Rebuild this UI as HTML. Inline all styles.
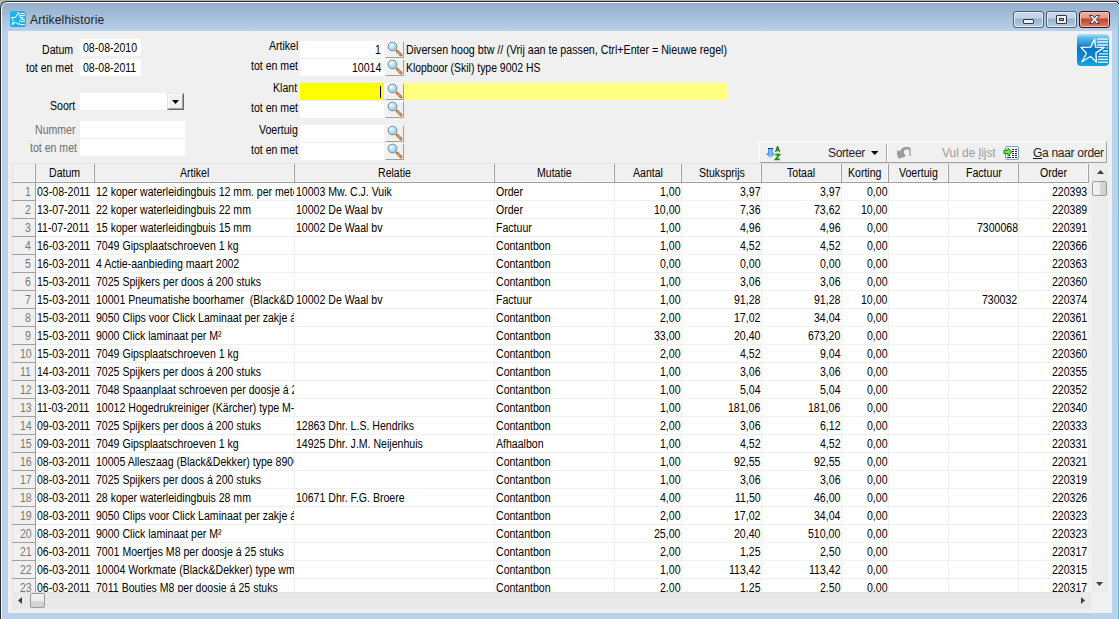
<!DOCTYPE html>
<html><head><meta charset="utf-8">
<style>
*{margin:0;padding:0}
html,body{width:1119px;height:619px;overflow:hidden;background:#b1b1b1}
body{position:relative;font-family:"Liberation Sans",sans-serif;font-size:11px;color:#000}
.abs{position:absolute}
.clip{overflow:hidden}
.t{position:absolute;white-space:nowrap;overflow:hidden;line-height:12px;height:12px;letter-spacing:-0.15px}
.hd{text-align:center}
.cl{text-align:left}
.cr{text-align:right}
.ind{text-align:right;color:#6d6d6d}
.lbl{position:absolute;white-space:nowrap;line-height:12px;text-align:right;letter-spacing:-0.15px}
.box{position:absolute;background:#fff}
.sbtn{position:absolute;width:19px;height:17px;box-sizing:border-box;background:#f0f0f0;border-top:1px solid #fff;border-left:1px solid #fff;border-right:1px solid #a0a0a0;border-bottom:1px solid #a0a0a0}
.seg{font-size:12px;letter-spacing:0;line-height:14px}
.tx{position:absolute;white-space:pre;font-size:12px;line-height:14px;height:14px;transform-origin:0 0}
.cp{position:absolute;overflow:hidden}
.sg{position:absolute;white-space:nowrap;font-size:12px;line-height:14px}
</style></head><body>
<!-- window frame -->
<div class="abs" style="left:0;top:1px;width:1119px;height:618px;background:#2b2b2b;border-radius:7px 4px 0 0"></div>
<div class="abs" style="left:1px;top:2px;width:1117px;height:617px;background:#f4f8fc;border-radius:6px 3px 0 0"></div>
<div class="abs" style="left:2px;top:3px;width:1116px;height:616px;background:linear-gradient(#93aecb 0px,#b9d1ea 28px,#b9d1ea 100%);border-radius:5px 2px 0 0"></div>
<div class="abs" style="left:1118px;top:4px;width:1px;height:615px;background:linear-gradient(#6fd6f4 0,#45c6ef 30px,#3ec4ee 100%)"></div>
<!-- title -->
<svg class="abs" style="left:10px;top:11px" width="16" height="16" viewBox="0 0 16 16">
<path d="M1.5 0h13l1.5 1.5v13l-1.5 1.5h-13l-1.5-1.5v-13z" fill="#19b2ee"/>
<path d="M8.3 1.3 L10 6.3 L13.2 6.5 L10 9.3 L8.8 13.8 L5.8 11.3 L2 13.8 L3.6 9.5 L1.1 6.5 L5.6 6.3 Z" fill="none" stroke="#fff" stroke-width="1"/>
<path d="M10 2.5h5M10 4.5h5M12 8.5h3M11 10.5h4M10 13.5h5" stroke="#fff" stroke-width="1"/>
</svg>
<!-- caption buttons -->
<div class="abs" style="left:1013px;top:11px;width:31px;height:17px;box-sizing:border-box;border:1px solid #4f5f75;border-radius:3px;background:linear-gradient(#dbe6f3 0,#c4d6ea 1px,#c4d6ea 6px,#99b2cd 7px,#b7cde5 100%);box-shadow:inset 0 0 0 1px #e3ecf6"></div>
<div class="abs" style="left:1023px;top:19px;width:11px;height:5px;box-sizing:border-box;border:1px solid #2e3a4c;border-radius:1px;background:#f2f2f2"></div>
<div class="abs" style="left:1046px;top:11px;width:31px;height:17px;box-sizing:border-box;border:1px solid #4f5f75;border-radius:3px;background:linear-gradient(#dbe6f3 0,#c4d6ea 1px,#c4d6ea 6px,#99b2cd 7px,#b7cde5 100%);box-shadow:inset 0 0 0 1px #e3ecf6"></div>
<div class="abs" style="left:1056px;top:15px;width:11px;height:9px;box-sizing:border-box;border:1px solid #2e3a4c;border-radius:1px;background:#f2f2f2"></div>
<div class="abs" style="left:1059px;top:18px;width:5px;height:3px;box-sizing:border-box;border:1px solid #2e3a4c;background:#9fb8d6"></div>
<div class="abs" style="left:1079px;top:11px;width:31px;height:17px;box-sizing:border-box;border:1px solid #3f0c12;border-radius:3px;background:linear-gradient(#eab0a4 0,#e39a8a 6px,#c4432a 7px,#d97a63 100%);box-shadow:inset 0 0 0 1px #f2c3b8"></div>
<svg class="abs" style="left:1089px;top:15px" width="11" height="9" viewBox="0 0 11 9">
<path d="M0.5 0.5 L3.8 0.5 L5.5 3 L7.2 0.5 L10.5 0.5 L7.3 4.5 L10.5 8.5 L7.2 8.5 L5.5 6 L3.8 8.5 L0.5 8.5 L3.7 4.5 Z" fill="#f8f8f8" stroke="#3a3f4e" stroke-width="1" stroke-linejoin="round"/>
</svg>
<!-- client -->
<div class="abs" style="left:8px;top:31px;width:1104px;height:582px;background:#f0f0f0"></div>
<!-- logo -->
<svg class="abs" style="left:1077px;top:34px" width="32" height="32" viewBox="0 0 32 32">
<defs><linearGradient id="lg" x1="0" y1="0" x2="0" y2="1">
<stop offset="0" stop-color="#b4e2f8"/><stop offset="0.12" stop-color="#5bb8ea"/><stop offset="0.45" stop-color="#0a76c6"/><stop offset="0.75" stop-color="#0a8ad2"/><stop offset="1" stop-color="#12a8e2"/></linearGradient></defs>
<rect x="0" y="0" width="32" height="32" rx="4" fill="url(#lg)"/>
<path d="M17.6 5 L18.6 13.1 L27.3 13.4 L18.9 18.9 L19.5 28 L13.4 22.5 L5 27.7 L9.5 19.3 L4 13.4 L13.7 13.1 Z" fill="none" stroke="#fff" stroke-width="1.3" stroke-linejoin="round"/>
<path d="M20 5h11M20 8h11M20 11h11M29.5 14h1.5M26 17h5M22 19.8h9M21 22.6h10M21 25.4h10M21 28.2h10" stroke="#e6f6fd" stroke-width="1.3"/>
</svg>
<!-- left form -->
<div class="box" style="left:80px;top:39px;width:61px;height:17px"></div>
<div class="box" style="left:80px;top:59px;width:61px;height:17px"></div>
<div class="box" style="left:80px;top:93px;width:104px;height:17px"></div>
<div class="abs" style="left:167px;top:93px;width:17px;height:17px;box-sizing:border-box;border-top:1px solid #e3e3e3;border-left:1px solid #e3e3e3;border-right:1px solid #696969;border-bottom:1px solid #696969;background:#f0f0f0"><div style="position:absolute;left:0;top:0;width:15px;height:15px;box-sizing:border-box;border-top:1px solid #fff;border-left:1px solid #fff;border-right:1px solid #a0a0a0;border-bottom:1px solid #a0a0a0"></div></div>
<svg class="abs" style="left:172px;top:100px" width="7" height="4"><path d="M0 0h7L3.5 4z" fill="#000"/></svg>
<div class="box" style="left:80px;top:121px;width:105px;height:17px"></div>
<div class="box" style="left:80px;top:139px;width:105px;height:17px"></div>
<!-- middle form -->
<div class="box" style="left:300px;top:41px;width:84px;height:17px"></div>
<div class="sbtn" style="left:385px;top:41px"></div>
<div class="box" style="left:300px;top:59px;width:84px;height:17px"></div>
<div class="sbtn" style="left:385px;top:59px"></div>
<div class="box" style="left:300px;top:83px;width:84px;height:17px;background:#ffff00"></div>
<div class="abs" style="left:380px;top:86px;width:1px;height:12px;background:#000080"></div>
<div class="sbtn" style="left:385px;top:83px"></div>
<div class="box" style="left:404px;top:83px;width:324px;height:17px;background:#ffff80"></div>
<div class="box" style="left:300px;top:101px;width:84px;height:17px"></div>
<div class="sbtn" style="left:385px;top:101px"></div>
<div class="box" style="left:300px;top:125px;width:84px;height:17px"></div>
<div class="sbtn" style="left:385px;top:125px"></div>
<div class="box" style="left:300px;top:143px;width:84px;height:17px"></div>
<div class="sbtn" style="left:385px;top:143px"></div>
<svg class="abs" style="left:385px;top:41px" width="19" height="17" viewBox="0 0 19 17">
<defs><radialGradient id="mg41" cx="0.38" cy="0.35" r="0.65"><stop offset="0" stop-color="#ffffff"/><stop offset="0.45" stop-color="#b8e6fb"/><stop offset="1" stop-color="#88cdf0"/></radialGradient></defs>
<line x1="12" y1="10" x2="16" y2="14" stroke="#7a6a60" stroke-width="2.8" stroke-linecap="round"/>
<line x1="12.3" y1="10.3" x2="15.7" y2="13.7" stroke="#ff8c28" stroke-width="1.6" stroke-linecap="round"/>
<line x1="13" y1="11.6" x2="14.6" y2="13.2" stroke="#ffd060" stroke-width="0.7"/>
<circle cx="7.5" cy="5.5" r="4.4" fill="url(#mg41)" stroke="#7d7d7d" stroke-width="0.9"/>
</svg>
<svg class="abs" style="left:385px;top:59px" width="19" height="17" viewBox="0 0 19 17">
<defs><radialGradient id="mg59" cx="0.38" cy="0.35" r="0.65"><stop offset="0" stop-color="#ffffff"/><stop offset="0.45" stop-color="#b8e6fb"/><stop offset="1" stop-color="#88cdf0"/></radialGradient></defs>
<line x1="12" y1="10" x2="16" y2="14" stroke="#7a6a60" stroke-width="2.8" stroke-linecap="round"/>
<line x1="12.3" y1="10.3" x2="15.7" y2="13.7" stroke="#ff8c28" stroke-width="1.6" stroke-linecap="round"/>
<line x1="13" y1="11.6" x2="14.6" y2="13.2" stroke="#ffd060" stroke-width="0.7"/>
<circle cx="7.5" cy="5.5" r="4.4" fill="url(#mg59)" stroke="#7d7d7d" stroke-width="0.9"/>
</svg>
<svg class="abs" style="left:385px;top:83px" width="19" height="17" viewBox="0 0 19 17">
<defs><radialGradient id="mg83" cx="0.38" cy="0.35" r="0.65"><stop offset="0" stop-color="#ffffff"/><stop offset="0.45" stop-color="#b8e6fb"/><stop offset="1" stop-color="#88cdf0"/></radialGradient></defs>
<line x1="12" y1="10" x2="16" y2="14" stroke="#7a6a60" stroke-width="2.8" stroke-linecap="round"/>
<line x1="12.3" y1="10.3" x2="15.7" y2="13.7" stroke="#ff8c28" stroke-width="1.6" stroke-linecap="round"/>
<line x1="13" y1="11.6" x2="14.6" y2="13.2" stroke="#ffd060" stroke-width="0.7"/>
<circle cx="7.5" cy="5.5" r="4.4" fill="url(#mg83)" stroke="#7d7d7d" stroke-width="0.9"/>
</svg>
<svg class="abs" style="left:385px;top:101px" width="19" height="17" viewBox="0 0 19 17">
<defs><radialGradient id="mg101" cx="0.38" cy="0.35" r="0.65"><stop offset="0" stop-color="#ffffff"/><stop offset="0.45" stop-color="#b8e6fb"/><stop offset="1" stop-color="#88cdf0"/></radialGradient></defs>
<line x1="12" y1="10" x2="16" y2="14" stroke="#7a6a60" stroke-width="2.8" stroke-linecap="round"/>
<line x1="12.3" y1="10.3" x2="15.7" y2="13.7" stroke="#ff8c28" stroke-width="1.6" stroke-linecap="round"/>
<line x1="13" y1="11.6" x2="14.6" y2="13.2" stroke="#ffd060" stroke-width="0.7"/>
<circle cx="7.5" cy="5.5" r="4.4" fill="url(#mg101)" stroke="#7d7d7d" stroke-width="0.9"/>
</svg>
<svg class="abs" style="left:385px;top:125px" width="19" height="17" viewBox="0 0 19 17">
<defs><radialGradient id="mg125" cx="0.38" cy="0.35" r="0.65"><stop offset="0" stop-color="#ffffff"/><stop offset="0.45" stop-color="#b8e6fb"/><stop offset="1" stop-color="#88cdf0"/></radialGradient></defs>
<line x1="12" y1="10" x2="16" y2="14" stroke="#7a6a60" stroke-width="2.8" stroke-linecap="round"/>
<line x1="12.3" y1="10.3" x2="15.7" y2="13.7" stroke="#ff8c28" stroke-width="1.6" stroke-linecap="round"/>
<line x1="13" y1="11.6" x2="14.6" y2="13.2" stroke="#ffd060" stroke-width="0.7"/>
<circle cx="7.5" cy="5.5" r="4.4" fill="url(#mg125)" stroke="#7d7d7d" stroke-width="0.9"/>
</svg>
<svg class="abs" style="left:385px;top:143px" width="19" height="17" viewBox="0 0 19 17">
<defs><radialGradient id="mg143" cx="0.38" cy="0.35" r="0.65"><stop offset="0" stop-color="#ffffff"/><stop offset="0.45" stop-color="#b8e6fb"/><stop offset="1" stop-color="#88cdf0"/></radialGradient></defs>
<line x1="12" y1="10" x2="16" y2="14" stroke="#7a6a60" stroke-width="2.8" stroke-linecap="round"/>
<line x1="12.3" y1="10.3" x2="15.7" y2="13.7" stroke="#ff8c28" stroke-width="1.6" stroke-linecap="round"/>
<line x1="13" y1="11.6" x2="14.6" y2="13.2" stroke="#ffd060" stroke-width="0.7"/>
<circle cx="7.5" cy="5.5" r="4.4" fill="url(#mg143)" stroke="#7d7d7d" stroke-width="0.9"/>
</svg>
<!-- toolbar -->
<div class="abs" style="left:759px;top:141px;width:348px;height:22px;box-sizing:border-box;border-top:1px solid #fff;border-left:1px solid #fff;border-right:1px solid #a0a0a0;border-bottom:1px solid #a0a0a0;background:#f0f0f0"></div>
<svg class="abs" style="left:760px;top:142px" width="24" height="20" viewBox="0 0 24 20">
<defs><linearGradient id="sg" x1="0" y1="0" x2="1" y2="0"><stop offset="0" stop-color="#0f5fd8"/><stop offset="0.5" stop-color="#8cc4fa"/><stop offset="1" stop-color="#1a6ee0"/></linearGradient></defs>
<path d="M8 6h5v5.5h2.2L10.5 16 5.8 11.5H8z" fill="url(#sg)"/>
<path d="M8 6.5h5" stroke="#0a3fb0" stroke-width="1"/>
<path d="M15.6 10 L17.6 4.6 L19.6 10 M16.4 8.3h2.4" fill="none" stroke="#139013" stroke-width="1.4" stroke-linejoin="round"/>
<path d="M15.3 12.6h4.2L15.5 17.4h4.3" fill="none" stroke="#139013" stroke-width="1.6"/>
</svg>
<svg class="abs" style="left:871px;top:151px" width="8" height="4"><path d="M0 0h7.5L3.75 4z" fill="#000"/></svg>
<div class="abs" style="left:886px;top:144px;width:1px;height:18px;background:#a8a8a8"></div>
<div class="abs" style="left:887px;top:144px;width:1px;height:18px;background:#fff"></div>
<svg class="abs" style="left:892px;top:143px" width="24" height="20" viewBox="0 0 24 20">
<path d="M5 7 L7 8.5 L10.5 5 L12.5 4 L17.5 4 L18.6 5.5 L18.8 13 L17.6 13 L17.3 7.2 L16.3 6.5 L13 6.5 L11.8 8.5 L12 10.5 L13.8 12.6 L12 14.2 L9 14.8 L7.5 15.8 L6 14.5 L5 11.5 Z" fill="#9c9c9c"/>
</svg>
<svg class="abs" style="left:1000px;top:142px" width="24" height="20" viewBox="0 0 24 20">
<rect x="5.5" y="4.5" width="13" height="13" rx="1.5" fill="#fbfdff" stroke="#7c9fd8" stroke-width="1"/>
<path d="M12 7.5h2M15 7.5h2M12 9.5h2M15 9.5h2M12 11.5h2M15 11.5h2M9 13.5h1M12 13.5h2M15 13.5h2M7 15.5h4M12 15.5h2M15 15.5h2" stroke="#2a2a2a" stroke-width="1"/>
<path d="M4 8.3h4V6.2l3.7 3.8L8 13.8v-2.1H4z" fill="#7de05a" stroke="#0a8a0a" stroke-width="1"/>
</svg>
<div class="abs" style="left:12px;top:163px;width:1077px;height:20px;background:#f0f0f0;border-top:1px solid #e3e3e3;border-left:1px solid #e3e3e3;box-sizing:border-box"></div>
<div class="abs" style="left:12px;top:182px;width:1077px;height:1px;background:#a0a0a0"></div>
<div class="abs" style="left:13px;top:181px;width:1076px;height:1px;background:#f8f8f8"></div>
<div class="abs" style="left:36px;top:183px;width:1052px;height:409px;background:#fff"></div>
<div class="abs" style="left:12px;top:183px;width:23px;height:409px;background:#f0f0f0;border-left:1px solid #e3e3e3;box-sizing:border-box"></div>
<div class="abs" style="left:35px;top:164px;width:1px;height:18px;background:#a0a0a0"></div>
<div class="abs" style="left:34px;top:164px;width:1px;height:17px;background:#f8f8f8"></div>
<div class="abs" style="left:94px;top:164px;width:1px;height:18px;background:#a0a0a0"></div>
<div class="abs" style="left:93px;top:164px;width:1px;height:17px;background:#f8f8f8"></div>
<div class="abs" style="left:294px;top:164px;width:1px;height:18px;background:#a0a0a0"></div>
<div class="abs" style="left:293px;top:164px;width:1px;height:17px;background:#f8f8f8"></div>
<div class="abs" style="left:494px;top:164px;width:1px;height:18px;background:#a0a0a0"></div>
<div class="abs" style="left:493px;top:164px;width:1px;height:17px;background:#f8f8f8"></div>
<div class="abs" style="left:614px;top:164px;width:1px;height:18px;background:#a0a0a0"></div>
<div class="abs" style="left:613px;top:164px;width:1px;height:17px;background:#f8f8f8"></div>
<div class="abs" style="left:681px;top:164px;width:1px;height:18px;background:#a0a0a0"></div>
<div class="abs" style="left:680px;top:164px;width:1px;height:17px;background:#f8f8f8"></div>
<div class="abs" style="left:761px;top:164px;width:1px;height:18px;background:#a0a0a0"></div>
<div class="abs" style="left:760px;top:164px;width:1px;height:17px;background:#f8f8f8"></div>
<div class="abs" style="left:841px;top:164px;width:1px;height:18px;background:#a0a0a0"></div>
<div class="abs" style="left:840px;top:164px;width:1px;height:17px;background:#f8f8f8"></div>
<div class="abs" style="left:888px;top:164px;width:1px;height:18px;background:#a0a0a0"></div>
<div class="abs" style="left:887px;top:164px;width:1px;height:17px;background:#f8f8f8"></div>
<div class="abs" style="left:948px;top:164px;width:1px;height:18px;background:#a0a0a0"></div>
<div class="abs" style="left:947px;top:164px;width:1px;height:17px;background:#f8f8f8"></div>
<div class="abs" style="left:1018px;top:164px;width:1px;height:18px;background:#a0a0a0"></div>
<div class="abs" style="left:1017px;top:164px;width:1px;height:17px;background:#f8f8f8"></div>
<div class="abs" style="left:1088px;top:164px;width:1px;height:18px;background:#a0a0a0"></div>
<div class="abs" style="left:1087px;top:164px;width:1px;height:17px;background:#f8f8f8"></div>
<div class="abs" style="left:12px;top:200px;width:23px;height:1px;background:#a0a0a0"></div>
<div class="abs" style="left:36px;top:200px;width:1052px;height:1px;background:#f0f0f0"></div>
<div class="abs" style="left:12px;top:218px;width:23px;height:1px;background:#a0a0a0"></div>
<div class="abs" style="left:36px;top:218px;width:1052px;height:1px;background:#f0f0f0"></div>
<div class="abs" style="left:12px;top:236px;width:23px;height:1px;background:#a0a0a0"></div>
<div class="abs" style="left:36px;top:236px;width:1052px;height:1px;background:#f0f0f0"></div>
<div class="abs" style="left:12px;top:254px;width:23px;height:1px;background:#a0a0a0"></div>
<div class="abs" style="left:36px;top:254px;width:1052px;height:1px;background:#f0f0f0"></div>
<div class="abs" style="left:12px;top:272px;width:23px;height:1px;background:#a0a0a0"></div>
<div class="abs" style="left:36px;top:272px;width:1052px;height:1px;background:#f0f0f0"></div>
<div class="abs" style="left:12px;top:290px;width:23px;height:1px;background:#a0a0a0"></div>
<div class="abs" style="left:36px;top:290px;width:1052px;height:1px;background:#f0f0f0"></div>
<div class="abs" style="left:12px;top:308px;width:23px;height:1px;background:#a0a0a0"></div>
<div class="abs" style="left:36px;top:308px;width:1052px;height:1px;background:#f0f0f0"></div>
<div class="abs" style="left:12px;top:326px;width:23px;height:1px;background:#a0a0a0"></div>
<div class="abs" style="left:36px;top:326px;width:1052px;height:1px;background:#f0f0f0"></div>
<div class="abs" style="left:12px;top:344px;width:23px;height:1px;background:#a0a0a0"></div>
<div class="abs" style="left:36px;top:344px;width:1052px;height:1px;background:#f0f0f0"></div>
<div class="abs" style="left:12px;top:362px;width:23px;height:1px;background:#a0a0a0"></div>
<div class="abs" style="left:36px;top:362px;width:1052px;height:1px;background:#f0f0f0"></div>
<div class="abs" style="left:12px;top:380px;width:23px;height:1px;background:#a0a0a0"></div>
<div class="abs" style="left:36px;top:380px;width:1052px;height:1px;background:#f0f0f0"></div>
<div class="abs" style="left:12px;top:398px;width:23px;height:1px;background:#a0a0a0"></div>
<div class="abs" style="left:36px;top:398px;width:1052px;height:1px;background:#f0f0f0"></div>
<div class="abs" style="left:12px;top:416px;width:23px;height:1px;background:#a0a0a0"></div>
<div class="abs" style="left:36px;top:416px;width:1052px;height:1px;background:#f0f0f0"></div>
<div class="abs" style="left:12px;top:434px;width:23px;height:1px;background:#a0a0a0"></div>
<div class="abs" style="left:36px;top:434px;width:1052px;height:1px;background:#f0f0f0"></div>
<div class="abs" style="left:12px;top:452px;width:23px;height:1px;background:#a0a0a0"></div>
<div class="abs" style="left:36px;top:452px;width:1052px;height:1px;background:#f0f0f0"></div>
<div class="abs" style="left:12px;top:470px;width:23px;height:1px;background:#a0a0a0"></div>
<div class="abs" style="left:36px;top:470px;width:1052px;height:1px;background:#f0f0f0"></div>
<div class="abs" style="left:12px;top:488px;width:23px;height:1px;background:#a0a0a0"></div>
<div class="abs" style="left:36px;top:488px;width:1052px;height:1px;background:#f0f0f0"></div>
<div class="abs" style="left:12px;top:506px;width:23px;height:1px;background:#a0a0a0"></div>
<div class="abs" style="left:36px;top:506px;width:1052px;height:1px;background:#f0f0f0"></div>
<div class="abs" style="left:12px;top:524px;width:23px;height:1px;background:#a0a0a0"></div>
<div class="abs" style="left:36px;top:524px;width:1052px;height:1px;background:#f0f0f0"></div>
<div class="abs" style="left:12px;top:542px;width:23px;height:1px;background:#a0a0a0"></div>
<div class="abs" style="left:36px;top:542px;width:1052px;height:1px;background:#f0f0f0"></div>
<div class="abs" style="left:12px;top:560px;width:23px;height:1px;background:#a0a0a0"></div>
<div class="abs" style="left:36px;top:560px;width:1052px;height:1px;background:#f0f0f0"></div>
<div class="abs" style="left:12px;top:578px;width:23px;height:1px;background:#a0a0a0"></div>
<div class="abs" style="left:36px;top:578px;width:1052px;height:1px;background:#f0f0f0"></div>
<div class="abs" style="left:94px;top:183px;width:1px;height:409px;background:#f0f0f0"></div>
<div class="abs" style="left:294px;top:183px;width:1px;height:409px;background:#f0f0f0"></div>
<div class="abs" style="left:494px;top:183px;width:1px;height:409px;background:#f0f0f0"></div>
<div class="abs" style="left:614px;top:183px;width:1px;height:409px;background:#f0f0f0"></div>
<div class="abs" style="left:681px;top:183px;width:1px;height:409px;background:#f0f0f0"></div>
<div class="abs" style="left:761px;top:183px;width:1px;height:409px;background:#f0f0f0"></div>
<div class="abs" style="left:841px;top:183px;width:1px;height:409px;background:#f0f0f0"></div>
<div class="abs" style="left:888px;top:183px;width:1px;height:409px;background:#f0f0f0"></div>
<div class="abs" style="left:948px;top:183px;width:1px;height:409px;background:#f0f0f0"></div>
<div class="abs" style="left:1018px;top:183px;width:1px;height:409px;background:#f0f0f0"></div>
<div class="abs" style="left:1088px;top:183px;width:1px;height:409px;background:#f0f0f0"></div>
<div class="abs" style="left:35px;top:183px;width:1px;height:409px;background:#a0a0a0"></div>
<div class="tx" style="left:42.39px;top:43px;transform:scaleX(0.8800)">Datum</div>
<div class="tx" style="left:82.60px;top:41px;transform:scaleX(0.8800)">08-08-2010</div>
<div class="tx" style="left:25.96px;top:61px;transform:scaleX(0.8800)">tot en met</div>
<div class="tx" style="left:82.60px;top:61px;transform:scaleX(0.8800)">08-08-2011</div>
<div class="tx" style="left:50.47px;top:99px;transform:scaleX(0.8800)">Soort</div>
<div class="tx" style="left:34.81px;top:123px;transform:scaleX(0.8800);color:#6d6d6d">Nummer</div>
<div class="tx" style="left:29.76px;top:141px;transform:scaleX(0.8800);color:#6d6d6d">tot en met</div>
<div class="tx" style="left:268.85px;top:39px;transform:scaleX(0.8800)">Artikel</div>
<div class="tx" style="left:374.84px;top:43px;transform:scaleX(0.8800)">1</div>
<div class="tx" style="left:406.00px;top:43px;transform:scaleX(0.8890)">Diversen hoog btw // (Vrij aan te passen, Ctrl+Enter = Nieuwe regel)</div>
<div class="tx" style="left:250.56px;top:59px;transform:scaleX(0.8800)">tot en met</div>
<div class="tx" style="left:351.85px;top:61px;transform:scaleX(0.8800)">10014</div>
<div class="tx" style="left:405.80px;top:61px;transform:scaleX(0.8685)">Klopboor (Skil) type 9002 HS</div>
<div class="tx" style="left:272.64px;top:81px;transform:scaleX(0.8800)">Klant</div>
<div class="tx" style="left:250.56px;top:101px;transform:scaleX(0.8800)">tot en met</div>
<div class="tx" style="left:259.44px;top:123px;transform:scaleX(0.8800)">Voertuig</div>
<div class="tx" style="left:250.56px;top:143px;transform:scaleX(0.8800)">tot en met</div>
<div class="tx" style="left:49.45px;top:166px;transform:scaleX(0.8800)">Datum</div>
<div class="tx" style="left:179.83px;top:166px;transform:scaleX(0.8800)">Artikel</div>
<div class="tx" style="left:378.06px;top:166px;transform:scaleX(0.8800)">Relatie</div>
<div class="tx" style="left:537.19px;top:166px;transform:scaleX(0.8800)">Mutatie</div>
<div class="tx" style="left:633.03px;top:166px;transform:scaleX(0.8800)">Aantal</div>
<div class="tx" style="left:698.61px;top:166px;transform:scaleX(0.8800)">Stuksprijs</div>
<div class="tx" style="left:787.41px;top:166px;transform:scaleX(0.8800)">Totaal</div>
<div class="tx" style="left:848.27px;top:166px;transform:scaleX(0.8800)">Korting</div>
<div class="tx" style="left:899.13px;top:166px;transform:scaleX(0.8800)">Voertuig</div>
<div class="tx" style="left:965.60px;top:166px;transform:scaleX(0.8800)">Factuur</div>
<div class="tx" style="left:1040.00px;top:166px;transform:scaleX(0.8800)">Order</div>
<div class="cp" style="left:12px;top:183px;width:23px;height:17px"><div class="tx" style="left:13.43px;top:2px;transform:scaleX(0.8800);color:#787878">1</div></div>
<div class="cp" style="left:36px;top:183px;width:58px;height:17px"><div class="tx" style="left:1.40px;top:2px;transform:scaleX(0.8800)">03-08-2011</div></div>
<div class="cp" style="left:95px;top:183px;width:199px;height:17px"><div class="tx" style="left:1.40px;top:2px;transform:scaleX(0.8800)">12 koper waterleidingbuis 12 mm. per meter</div></div>
<div class="cp" style="left:295px;top:183px;width:199px;height:17px"><div class="tx" style="left:1.40px;top:2px;transform:scaleX(0.8800)">10003 Mw. C.J. Vuik</div></div>
<div class="cp" style="left:495px;top:183px;width:119px;height:17px"><div class="tx" style="left:1.40px;top:2px;transform:scaleX(0.8800)">Order</div></div>
<div class="cp" style="left:615px;top:183px;width:66px;height:17px"><div class="tx" style="left:45.15px;top:2px;transform:scaleX(0.8800)">1,00</div></div>
<div class="cp" style="left:682px;top:183px;width:79px;height:17px"><div class="tx" style="left:58.15px;top:2px;transform:scaleX(0.8800)">3,97</div></div>
<div class="cp" style="left:762px;top:183px;width:79px;height:17px"><div class="tx" style="left:58.15px;top:2px;transform:scaleX(0.8800)">3,97</div></div>
<div class="cp" style="left:842px;top:183px;width:46px;height:17px"><div class="tx" style="left:25.15px;top:2px;transform:scaleX(0.8800)">0,00</div></div>
<div class="cp" style="left:1019px;top:183px;width:69px;height:17px"><div class="tx" style="left:33.46px;top:2px;transform:scaleX(0.8800)">220393</div></div>
<div class="cp" style="left:12px;top:201px;width:23px;height:17px"><div class="tx" style="left:13.43px;top:2px;transform:scaleX(0.8800);color:#787878">2</div></div>
<div class="cp" style="left:36px;top:201px;width:58px;height:17px"><div class="tx" style="left:1.40px;top:2px;transform:scaleX(0.8800)">13-07-2011</div></div>
<div class="cp" style="left:95px;top:201px;width:199px;height:17px"><div class="tx" style="left:1.40px;top:2px;transform:scaleX(0.8800)">22 koper waterleidingbuis 22 mm</div></div>
<div class="cp" style="left:295px;top:201px;width:199px;height:17px"><div class="tx" style="left:1.40px;top:2px;transform:scaleX(0.8800)">10002 De Waal bv</div></div>
<div class="cp" style="left:495px;top:201px;width:119px;height:17px"><div class="tx" style="left:1.40px;top:2px;transform:scaleX(0.8800)">Order</div></div>
<div class="cp" style="left:615px;top:201px;width:66px;height:17px"><div class="tx" style="left:39.27px;top:2px;transform:scaleX(0.8800)">10,00</div></div>
<div class="cp" style="left:682px;top:201px;width:79px;height:17px"><div class="tx" style="left:58.15px;top:2px;transform:scaleX(0.8800)">7,36</div></div>
<div class="cp" style="left:762px;top:201px;width:79px;height:17px"><div class="tx" style="left:52.27px;top:2px;transform:scaleX(0.8800)">73,62</div></div>
<div class="cp" style="left:842px;top:201px;width:46px;height:17px"><div class="tx" style="left:19.27px;top:2px;transform:scaleX(0.8800)">10,00</div></div>
<div class="cp" style="left:1019px;top:201px;width:69px;height:17px"><div class="tx" style="left:33.46px;top:2px;transform:scaleX(0.8800)">220389</div></div>
<div class="cp" style="left:12px;top:219px;width:23px;height:17px"><div class="tx" style="left:13.43px;top:2px;transform:scaleX(0.8800);color:#787878">3</div></div>
<div class="cp" style="left:36px;top:219px;width:58px;height:17px"><div class="tx" style="left:1.40px;top:2px;transform:scaleX(0.8800)">11-07-2011</div></div>
<div class="cp" style="left:95px;top:219px;width:199px;height:17px"><div class="tx" style="left:1.40px;top:2px;transform:scaleX(0.8800)">15 koper waterleidingbuis 15 mm</div></div>
<div class="cp" style="left:295px;top:219px;width:199px;height:17px"><div class="tx" style="left:1.40px;top:2px;transform:scaleX(0.8800)">10002 De Waal bv</div></div>
<div class="cp" style="left:495px;top:219px;width:119px;height:17px"><div class="tx" style="left:1.40px;top:2px;transform:scaleX(0.8800)">Factuur</div></div>
<div class="cp" style="left:615px;top:219px;width:66px;height:17px"><div class="tx" style="left:45.15px;top:2px;transform:scaleX(0.8800)">1,00</div></div>
<div class="cp" style="left:682px;top:219px;width:79px;height:17px"><div class="tx" style="left:58.15px;top:2px;transform:scaleX(0.8800)">4,96</div></div>
<div class="cp" style="left:762px;top:219px;width:79px;height:17px"><div class="tx" style="left:58.15px;top:2px;transform:scaleX(0.8800)">4,96</div></div>
<div class="cp" style="left:842px;top:219px;width:46px;height:17px"><div class="tx" style="left:25.15px;top:2px;transform:scaleX(0.8800)">0,00</div></div>
<div class="cp" style="left:949px;top:219px;width:69px;height:17px"><div class="tx" style="left:27.59px;top:2px;transform:scaleX(0.8800)">7300068</div></div>
<div class="cp" style="left:1019px;top:219px;width:69px;height:17px"><div class="tx" style="left:33.46px;top:2px;transform:scaleX(0.8800)">220391</div></div>
<div class="cp" style="left:12px;top:237px;width:23px;height:17px"><div class="tx" style="left:13.43px;top:2px;transform:scaleX(0.8800);color:#787878">4</div></div>
<div class="cp" style="left:36px;top:237px;width:58px;height:17px"><div class="tx" style="left:1.40px;top:2px;transform:scaleX(0.8800)">16-03-2011</div></div>
<div class="cp" style="left:95px;top:237px;width:199px;height:17px"><div class="tx" style="left:1.40px;top:2px;transform:scaleX(0.8800)">7049 Gipsplaatschroeven 1 kg</div></div>
<div class="cp" style="left:495px;top:237px;width:119px;height:17px"><div class="tx" style="left:1.40px;top:2px;transform:scaleX(0.8800)">Contantbon</div></div>
<div class="cp" style="left:615px;top:237px;width:66px;height:17px"><div class="tx" style="left:45.15px;top:2px;transform:scaleX(0.8800)">1,00</div></div>
<div class="cp" style="left:682px;top:237px;width:79px;height:17px"><div class="tx" style="left:58.15px;top:2px;transform:scaleX(0.8800)">4,52</div></div>
<div class="cp" style="left:762px;top:237px;width:79px;height:17px"><div class="tx" style="left:58.15px;top:2px;transform:scaleX(0.8800)">4,52</div></div>
<div class="cp" style="left:842px;top:237px;width:46px;height:17px"><div class="tx" style="left:25.15px;top:2px;transform:scaleX(0.8800)">0,00</div></div>
<div class="cp" style="left:1019px;top:237px;width:69px;height:17px"><div class="tx" style="left:33.46px;top:2px;transform:scaleX(0.8800)">220366</div></div>
<div class="cp" style="left:12px;top:255px;width:23px;height:17px"><div class="tx" style="left:13.43px;top:2px;transform:scaleX(0.8800);color:#787878">5</div></div>
<div class="cp" style="left:36px;top:255px;width:58px;height:17px"><div class="tx" style="left:1.40px;top:2px;transform:scaleX(0.8800)">16-03-2011</div></div>
<div class="cp" style="left:95px;top:255px;width:199px;height:17px"><div class="tx" style="left:1.40px;top:2px;transform:scaleX(0.8800)">4 Actie-aanbieding maart 2002</div></div>
<div class="cp" style="left:495px;top:255px;width:119px;height:17px"><div class="tx" style="left:1.40px;top:2px;transform:scaleX(0.8800)">Contantbon</div></div>
<div class="cp" style="left:615px;top:255px;width:66px;height:17px"><div class="tx" style="left:45.15px;top:2px;transform:scaleX(0.8800)">0,00</div></div>
<div class="cp" style="left:682px;top:255px;width:79px;height:17px"><div class="tx" style="left:58.15px;top:2px;transform:scaleX(0.8800)">0,00</div></div>
<div class="cp" style="left:762px;top:255px;width:79px;height:17px"><div class="tx" style="left:58.15px;top:2px;transform:scaleX(0.8800)">0,00</div></div>
<div class="cp" style="left:842px;top:255px;width:46px;height:17px"><div class="tx" style="left:25.15px;top:2px;transform:scaleX(0.8800)">0,00</div></div>
<div class="cp" style="left:1019px;top:255px;width:69px;height:17px"><div class="tx" style="left:33.46px;top:2px;transform:scaleX(0.8800)">220363</div></div>
<div class="cp" style="left:12px;top:273px;width:23px;height:17px"><div class="tx" style="left:13.43px;top:2px;transform:scaleX(0.8800);color:#787878">6</div></div>
<div class="cp" style="left:36px;top:273px;width:58px;height:17px"><div class="tx" style="left:1.40px;top:2px;transform:scaleX(0.8800)">15-03-2011</div></div>
<div class="cp" style="left:95px;top:273px;width:199px;height:17px"><div class="tx" style="left:1.40px;top:2px;transform:scaleX(0.8800)">7025 Spijkers per doos á 200 stuks</div></div>
<div class="cp" style="left:495px;top:273px;width:119px;height:17px"><div class="tx" style="left:1.40px;top:2px;transform:scaleX(0.8800)">Contantbon</div></div>
<div class="cp" style="left:615px;top:273px;width:66px;height:17px"><div class="tx" style="left:45.15px;top:2px;transform:scaleX(0.8800)">1,00</div></div>
<div class="cp" style="left:682px;top:273px;width:79px;height:17px"><div class="tx" style="left:58.15px;top:2px;transform:scaleX(0.8800)">3,06</div></div>
<div class="cp" style="left:762px;top:273px;width:79px;height:17px"><div class="tx" style="left:58.15px;top:2px;transform:scaleX(0.8800)">3,06</div></div>
<div class="cp" style="left:842px;top:273px;width:46px;height:17px"><div class="tx" style="left:25.15px;top:2px;transform:scaleX(0.8800)">0,00</div></div>
<div class="cp" style="left:1019px;top:273px;width:69px;height:17px"><div class="tx" style="left:33.46px;top:2px;transform:scaleX(0.8800)">220360</div></div>
<div class="cp" style="left:12px;top:291px;width:23px;height:17px"><div class="tx" style="left:13.43px;top:2px;transform:scaleX(0.8800);color:#787878">7</div></div>
<div class="cp" style="left:36px;top:291px;width:58px;height:17px"><div class="tx" style="left:1.40px;top:2px;transform:scaleX(0.8800)">15-03-2011</div></div>
<div class="cp" style="left:95px;top:291px;width:199px;height:17px"><div class="tx" style="left:1.40px;top:2px;transform:scaleX(0.8800)">10001 Pneumatishe boorhamer  (Black&amp;Decker)</div></div>
<div class="cp" style="left:295px;top:291px;width:199px;height:17px"><div class="tx" style="left:1.40px;top:2px;transform:scaleX(0.8800)">10002 De Waal bv</div></div>
<div class="cp" style="left:495px;top:291px;width:119px;height:17px"><div class="tx" style="left:1.40px;top:2px;transform:scaleX(0.8800)">Factuur</div></div>
<div class="cp" style="left:615px;top:291px;width:66px;height:17px"><div class="tx" style="left:45.15px;top:2px;transform:scaleX(0.8800)">1,00</div></div>
<div class="cp" style="left:682px;top:291px;width:79px;height:17px"><div class="tx" style="left:52.27px;top:2px;transform:scaleX(0.8800)">91,28</div></div>
<div class="cp" style="left:762px;top:291px;width:79px;height:17px"><div class="tx" style="left:52.27px;top:2px;transform:scaleX(0.8800)">91,28</div></div>
<div class="cp" style="left:842px;top:291px;width:46px;height:17px"><div class="tx" style="left:19.27px;top:2px;transform:scaleX(0.8800)">10,00</div></div>
<div class="cp" style="left:949px;top:291px;width:69px;height:17px"><div class="tx" style="left:33.46px;top:2px;transform:scaleX(0.8800)">730032</div></div>
<div class="cp" style="left:1019px;top:291px;width:69px;height:17px"><div class="tx" style="left:33.46px;top:2px;transform:scaleX(0.8800)">220374</div></div>
<div class="cp" style="left:12px;top:309px;width:23px;height:17px"><div class="tx" style="left:13.43px;top:2px;transform:scaleX(0.8800);color:#787878">8</div></div>
<div class="cp" style="left:36px;top:309px;width:58px;height:17px"><div class="tx" style="left:1.40px;top:2px;transform:scaleX(0.8800)">15-03-2011</div></div>
<div class="cp" style="left:95px;top:309px;width:199px;height:17px"><div class="tx" style="left:1.40px;top:2px;transform:scaleX(0.8800)">9050 Clips voor Click Laminaat per zakje á 100</div></div>
<div class="cp" style="left:495px;top:309px;width:119px;height:17px"><div class="tx" style="left:1.40px;top:2px;transform:scaleX(0.8800)">Contantbon</div></div>
<div class="cp" style="left:615px;top:309px;width:66px;height:17px"><div class="tx" style="left:45.15px;top:2px;transform:scaleX(0.8800)">2,00</div></div>
<div class="cp" style="left:682px;top:309px;width:79px;height:17px"><div class="tx" style="left:52.27px;top:2px;transform:scaleX(0.8800)">17,02</div></div>
<div class="cp" style="left:762px;top:309px;width:79px;height:17px"><div class="tx" style="left:52.27px;top:2px;transform:scaleX(0.8800)">34,04</div></div>
<div class="cp" style="left:842px;top:309px;width:46px;height:17px"><div class="tx" style="left:25.15px;top:2px;transform:scaleX(0.8800)">0,00</div></div>
<div class="cp" style="left:1019px;top:309px;width:69px;height:17px"><div class="tx" style="left:33.46px;top:2px;transform:scaleX(0.8800)">220361</div></div>
<div class="cp" style="left:12px;top:327px;width:23px;height:17px"><div class="tx" style="left:13.43px;top:2px;transform:scaleX(0.8800);color:#787878">9</div></div>
<div class="cp" style="left:36px;top:327px;width:58px;height:17px"><div class="tx" style="left:1.40px;top:2px;transform:scaleX(0.8800)">15-03-2011</div></div>
<div class="cp" style="left:95px;top:327px;width:199px;height:17px"><div class="tx" style="left:1.40px;top:2px;transform:scaleX(0.8800)">9000 Click laminaat per M²</div></div>
<div class="cp" style="left:495px;top:327px;width:119px;height:17px"><div class="tx" style="left:1.40px;top:2px;transform:scaleX(0.8800)">Contantbon</div></div>
<div class="cp" style="left:615px;top:327px;width:66px;height:17px"><div class="tx" style="left:39.27px;top:2px;transform:scaleX(0.8800)">33,00</div></div>
<div class="cp" style="left:682px;top:327px;width:79px;height:17px"><div class="tx" style="left:52.27px;top:2px;transform:scaleX(0.8800)">20,40</div></div>
<div class="cp" style="left:762px;top:327px;width:79px;height:17px"><div class="tx" style="left:46.40px;top:2px;transform:scaleX(0.8800)">673,20</div></div>
<div class="cp" style="left:842px;top:327px;width:46px;height:17px"><div class="tx" style="left:25.15px;top:2px;transform:scaleX(0.8800)">0,00</div></div>
<div class="cp" style="left:1019px;top:327px;width:69px;height:17px"><div class="tx" style="left:33.46px;top:2px;transform:scaleX(0.8800)">220361</div></div>
<div class="cp" style="left:12px;top:345px;width:23px;height:17px"><div class="tx" style="left:7.55px;top:2px;transform:scaleX(0.8800);color:#787878">10</div></div>
<div class="cp" style="left:36px;top:345px;width:58px;height:17px"><div class="tx" style="left:1.40px;top:2px;transform:scaleX(0.8800)">15-03-2011</div></div>
<div class="cp" style="left:95px;top:345px;width:199px;height:17px"><div class="tx" style="left:1.40px;top:2px;transform:scaleX(0.8800)">7049 Gipsplaatschroeven 1 kg</div></div>
<div class="cp" style="left:495px;top:345px;width:119px;height:17px"><div class="tx" style="left:1.40px;top:2px;transform:scaleX(0.8800)">Contantbon</div></div>
<div class="cp" style="left:615px;top:345px;width:66px;height:17px"><div class="tx" style="left:45.15px;top:2px;transform:scaleX(0.8800)">2,00</div></div>
<div class="cp" style="left:682px;top:345px;width:79px;height:17px"><div class="tx" style="left:58.15px;top:2px;transform:scaleX(0.8800)">4,52</div></div>
<div class="cp" style="left:762px;top:345px;width:79px;height:17px"><div class="tx" style="left:58.15px;top:2px;transform:scaleX(0.8800)">9,04</div></div>
<div class="cp" style="left:842px;top:345px;width:46px;height:17px"><div class="tx" style="left:25.15px;top:2px;transform:scaleX(0.8800)">0,00</div></div>
<div class="cp" style="left:1019px;top:345px;width:69px;height:17px"><div class="tx" style="left:33.46px;top:2px;transform:scaleX(0.8800)">220360</div></div>
<div class="cp" style="left:12px;top:363px;width:23px;height:17px"><div class="tx" style="left:8.34px;top:2px;transform:scaleX(0.8800);color:#787878">11</div></div>
<div class="cp" style="left:36px;top:363px;width:58px;height:17px"><div class="tx" style="left:1.40px;top:2px;transform:scaleX(0.8800)">14-03-2011</div></div>
<div class="cp" style="left:95px;top:363px;width:199px;height:17px"><div class="tx" style="left:1.40px;top:2px;transform:scaleX(0.8800)">7025 Spijkers per doos á 200 stuks</div></div>
<div class="cp" style="left:495px;top:363px;width:119px;height:17px"><div class="tx" style="left:1.40px;top:2px;transform:scaleX(0.8800)">Contantbon</div></div>
<div class="cp" style="left:615px;top:363px;width:66px;height:17px"><div class="tx" style="left:45.15px;top:2px;transform:scaleX(0.8800)">1,00</div></div>
<div class="cp" style="left:682px;top:363px;width:79px;height:17px"><div class="tx" style="left:58.15px;top:2px;transform:scaleX(0.8800)">3,06</div></div>
<div class="cp" style="left:762px;top:363px;width:79px;height:17px"><div class="tx" style="left:58.15px;top:2px;transform:scaleX(0.8800)">3,06</div></div>
<div class="cp" style="left:842px;top:363px;width:46px;height:17px"><div class="tx" style="left:25.15px;top:2px;transform:scaleX(0.8800)">0,00</div></div>
<div class="cp" style="left:1019px;top:363px;width:69px;height:17px"><div class="tx" style="left:33.46px;top:2px;transform:scaleX(0.8800)">220355</div></div>
<div class="cp" style="left:12px;top:381px;width:23px;height:17px"><div class="tx" style="left:7.55px;top:2px;transform:scaleX(0.8800);color:#787878">12</div></div>
<div class="cp" style="left:36px;top:381px;width:58px;height:17px"><div class="tx" style="left:1.40px;top:2px;transform:scaleX(0.8800)">13-03-2011</div></div>
<div class="cp" style="left:95px;top:381px;width:199px;height:17px"><div class="tx" style="left:1.40px;top:2px;transform:scaleX(0.8800)">7048 Spaanplaat schroeven per doosje á 200</div></div>
<div class="cp" style="left:495px;top:381px;width:119px;height:17px"><div class="tx" style="left:1.40px;top:2px;transform:scaleX(0.8800)">Contantbon</div></div>
<div class="cp" style="left:615px;top:381px;width:66px;height:17px"><div class="tx" style="left:45.15px;top:2px;transform:scaleX(0.8800)">1,00</div></div>
<div class="cp" style="left:682px;top:381px;width:79px;height:17px"><div class="tx" style="left:58.15px;top:2px;transform:scaleX(0.8800)">5,04</div></div>
<div class="cp" style="left:762px;top:381px;width:79px;height:17px"><div class="tx" style="left:58.15px;top:2px;transform:scaleX(0.8800)">5,04</div></div>
<div class="cp" style="left:842px;top:381px;width:46px;height:17px"><div class="tx" style="left:25.15px;top:2px;transform:scaleX(0.8800)">0,00</div></div>
<div class="cp" style="left:1019px;top:381px;width:69px;height:17px"><div class="tx" style="left:33.46px;top:2px;transform:scaleX(0.8800)">220352</div></div>
<div class="cp" style="left:12px;top:399px;width:23px;height:17px"><div class="tx" style="left:7.55px;top:2px;transform:scaleX(0.8800);color:#787878">13</div></div>
<div class="cp" style="left:36px;top:399px;width:58px;height:17px"><div class="tx" style="left:1.40px;top:2px;transform:scaleX(0.8800)">11-03-2011</div></div>
<div class="cp" style="left:95px;top:399px;width:199px;height:17px"><div class="tx" style="left:1.40px;top:2px;transform:scaleX(0.8800)">10012 Hogedrukreiniger (Kärcher) type M-2000</div></div>
<div class="cp" style="left:495px;top:399px;width:119px;height:17px"><div class="tx" style="left:1.40px;top:2px;transform:scaleX(0.8800)">Contantbon</div></div>
<div class="cp" style="left:615px;top:399px;width:66px;height:17px"><div class="tx" style="left:45.15px;top:2px;transform:scaleX(0.8800)">1,00</div></div>
<div class="cp" style="left:682px;top:399px;width:79px;height:17px"><div class="tx" style="left:46.40px;top:2px;transform:scaleX(0.8800)">181,06</div></div>
<div class="cp" style="left:762px;top:399px;width:79px;height:17px"><div class="tx" style="left:46.40px;top:2px;transform:scaleX(0.8800)">181,06</div></div>
<div class="cp" style="left:842px;top:399px;width:46px;height:17px"><div class="tx" style="left:25.15px;top:2px;transform:scaleX(0.8800)">0,00</div></div>
<div class="cp" style="left:1019px;top:399px;width:69px;height:17px"><div class="tx" style="left:33.46px;top:2px;transform:scaleX(0.8800)">220340</div></div>
<div class="cp" style="left:12px;top:417px;width:23px;height:17px"><div class="tx" style="left:7.55px;top:2px;transform:scaleX(0.8800);color:#787878">14</div></div>
<div class="cp" style="left:36px;top:417px;width:58px;height:17px"><div class="tx" style="left:1.40px;top:2px;transform:scaleX(0.8800)">09-03-2011</div></div>
<div class="cp" style="left:95px;top:417px;width:199px;height:17px"><div class="tx" style="left:1.40px;top:2px;transform:scaleX(0.8800)">7025 Spijkers per doos á 200 stuks</div></div>
<div class="cp" style="left:295px;top:417px;width:199px;height:17px"><div class="tx" style="left:1.40px;top:2px;transform:scaleX(0.8800)">12863 Dhr. L.S. Hendriks</div></div>
<div class="cp" style="left:495px;top:417px;width:119px;height:17px"><div class="tx" style="left:1.40px;top:2px;transform:scaleX(0.8800)">Contantbon</div></div>
<div class="cp" style="left:615px;top:417px;width:66px;height:17px"><div class="tx" style="left:45.15px;top:2px;transform:scaleX(0.8800)">2,00</div></div>
<div class="cp" style="left:682px;top:417px;width:79px;height:17px"><div class="tx" style="left:58.15px;top:2px;transform:scaleX(0.8800)">3,06</div></div>
<div class="cp" style="left:762px;top:417px;width:79px;height:17px"><div class="tx" style="left:58.15px;top:2px;transform:scaleX(0.8800)">6,12</div></div>
<div class="cp" style="left:842px;top:417px;width:46px;height:17px"><div class="tx" style="left:25.15px;top:2px;transform:scaleX(0.8800)">0,00</div></div>
<div class="cp" style="left:1019px;top:417px;width:69px;height:17px"><div class="tx" style="left:33.46px;top:2px;transform:scaleX(0.8800)">220333</div></div>
<div class="cp" style="left:12px;top:435px;width:23px;height:17px"><div class="tx" style="left:7.55px;top:2px;transform:scaleX(0.8800);color:#787878">15</div></div>
<div class="cp" style="left:36px;top:435px;width:58px;height:17px"><div class="tx" style="left:1.40px;top:2px;transform:scaleX(0.8800)">09-03-2011</div></div>
<div class="cp" style="left:95px;top:435px;width:199px;height:17px"><div class="tx" style="left:1.40px;top:2px;transform:scaleX(0.8800)">7049 Gipsplaatschroeven 1 kg</div></div>
<div class="cp" style="left:295px;top:435px;width:199px;height:17px"><div class="tx" style="left:1.40px;top:2px;transform:scaleX(0.8800)">14925 Dhr. J.M. Neijenhuis</div></div>
<div class="cp" style="left:495px;top:435px;width:119px;height:17px"><div class="tx" style="left:1.40px;top:2px;transform:scaleX(0.8800)">Afhaalbon</div></div>
<div class="cp" style="left:615px;top:435px;width:66px;height:17px"><div class="tx" style="left:45.15px;top:2px;transform:scaleX(0.8800)">1,00</div></div>
<div class="cp" style="left:682px;top:435px;width:79px;height:17px"><div class="tx" style="left:58.15px;top:2px;transform:scaleX(0.8800)">4,52</div></div>
<div class="cp" style="left:762px;top:435px;width:79px;height:17px"><div class="tx" style="left:58.15px;top:2px;transform:scaleX(0.8800)">4,52</div></div>
<div class="cp" style="left:842px;top:435px;width:46px;height:17px"><div class="tx" style="left:25.15px;top:2px;transform:scaleX(0.8800)">0,00</div></div>
<div class="cp" style="left:1019px;top:435px;width:69px;height:17px"><div class="tx" style="left:33.46px;top:2px;transform:scaleX(0.8800)">220331</div></div>
<div class="cp" style="left:12px;top:453px;width:23px;height:17px"><div class="tx" style="left:7.55px;top:2px;transform:scaleX(0.8800);color:#787878">16</div></div>
<div class="cp" style="left:36px;top:453px;width:58px;height:17px"><div class="tx" style="left:1.40px;top:2px;transform:scaleX(0.8800)">08-03-2011</div></div>
<div class="cp" style="left:95px;top:453px;width:199px;height:17px"><div class="tx" style="left:1.40px;top:2px;transform:scaleX(0.8800)">10005 Alleszaag (Black&amp;Dekker) type 8900</div></div>
<div class="cp" style="left:495px;top:453px;width:119px;height:17px"><div class="tx" style="left:1.40px;top:2px;transform:scaleX(0.8800)">Contantbon</div></div>
<div class="cp" style="left:615px;top:453px;width:66px;height:17px"><div class="tx" style="left:45.15px;top:2px;transform:scaleX(0.8800)">1,00</div></div>
<div class="cp" style="left:682px;top:453px;width:79px;height:17px"><div class="tx" style="left:52.27px;top:2px;transform:scaleX(0.8800)">92,55</div></div>
<div class="cp" style="left:762px;top:453px;width:79px;height:17px"><div class="tx" style="left:52.27px;top:2px;transform:scaleX(0.8800)">92,55</div></div>
<div class="cp" style="left:842px;top:453px;width:46px;height:17px"><div class="tx" style="left:25.15px;top:2px;transform:scaleX(0.8800)">0,00</div></div>
<div class="cp" style="left:1019px;top:453px;width:69px;height:17px"><div class="tx" style="left:33.46px;top:2px;transform:scaleX(0.8800)">220321</div></div>
<div class="cp" style="left:12px;top:471px;width:23px;height:17px"><div class="tx" style="left:7.55px;top:2px;transform:scaleX(0.8800);color:#787878">17</div></div>
<div class="cp" style="left:36px;top:471px;width:58px;height:17px"><div class="tx" style="left:1.40px;top:2px;transform:scaleX(0.8800)">08-03-2011</div></div>
<div class="cp" style="left:95px;top:471px;width:199px;height:17px"><div class="tx" style="left:1.40px;top:2px;transform:scaleX(0.8800)">7025 Spijkers per doos á 200 stuks</div></div>
<div class="cp" style="left:495px;top:471px;width:119px;height:17px"><div class="tx" style="left:1.40px;top:2px;transform:scaleX(0.8800)">Contantbon</div></div>
<div class="cp" style="left:615px;top:471px;width:66px;height:17px"><div class="tx" style="left:45.15px;top:2px;transform:scaleX(0.8800)">1,00</div></div>
<div class="cp" style="left:682px;top:471px;width:79px;height:17px"><div class="tx" style="left:58.15px;top:2px;transform:scaleX(0.8800)">3,06</div></div>
<div class="cp" style="left:762px;top:471px;width:79px;height:17px"><div class="tx" style="left:58.15px;top:2px;transform:scaleX(0.8800)">3,06</div></div>
<div class="cp" style="left:842px;top:471px;width:46px;height:17px"><div class="tx" style="left:25.15px;top:2px;transform:scaleX(0.8800)">0,00</div></div>
<div class="cp" style="left:1019px;top:471px;width:69px;height:17px"><div class="tx" style="left:33.46px;top:2px;transform:scaleX(0.8800)">220319</div></div>
<div class="cp" style="left:12px;top:489px;width:23px;height:17px"><div class="tx" style="left:7.55px;top:2px;transform:scaleX(0.8800);color:#787878">18</div></div>
<div class="cp" style="left:36px;top:489px;width:58px;height:17px"><div class="tx" style="left:1.40px;top:2px;transform:scaleX(0.8800)">08-03-2011</div></div>
<div class="cp" style="left:95px;top:489px;width:199px;height:17px"><div class="tx" style="left:1.40px;top:2px;transform:scaleX(0.8800)">28 koper waterleidingbuis 28 mm</div></div>
<div class="cp" style="left:295px;top:489px;width:199px;height:17px"><div class="tx" style="left:1.40px;top:2px;transform:scaleX(0.8800)">10671 Dhr. F.G. Broere</div></div>
<div class="cp" style="left:495px;top:489px;width:119px;height:17px"><div class="tx" style="left:1.40px;top:2px;transform:scaleX(0.8800)">Contantbon</div></div>
<div class="cp" style="left:615px;top:489px;width:66px;height:17px"><div class="tx" style="left:45.15px;top:2px;transform:scaleX(0.8800)">4,00</div></div>
<div class="cp" style="left:682px;top:489px;width:79px;height:17px"><div class="tx" style="left:53.06px;top:2px;transform:scaleX(0.8800)">11,50</div></div>
<div class="cp" style="left:762px;top:489px;width:79px;height:17px"><div class="tx" style="left:52.27px;top:2px;transform:scaleX(0.8800)">46,00</div></div>
<div class="cp" style="left:842px;top:489px;width:46px;height:17px"><div class="tx" style="left:25.15px;top:2px;transform:scaleX(0.8800)">0,00</div></div>
<div class="cp" style="left:1019px;top:489px;width:69px;height:17px"><div class="tx" style="left:33.46px;top:2px;transform:scaleX(0.8800)">220326</div></div>
<div class="cp" style="left:12px;top:507px;width:23px;height:17px"><div class="tx" style="left:7.55px;top:2px;transform:scaleX(0.8800);color:#787878">19</div></div>
<div class="cp" style="left:36px;top:507px;width:58px;height:17px"><div class="tx" style="left:1.40px;top:2px;transform:scaleX(0.8800)">08-03-2011</div></div>
<div class="cp" style="left:95px;top:507px;width:199px;height:17px"><div class="tx" style="left:1.40px;top:2px;transform:scaleX(0.8800)">9050 Clips voor Click Laminaat per zakje á 100</div></div>
<div class="cp" style="left:495px;top:507px;width:119px;height:17px"><div class="tx" style="left:1.40px;top:2px;transform:scaleX(0.8800)">Contantbon</div></div>
<div class="cp" style="left:615px;top:507px;width:66px;height:17px"><div class="tx" style="left:45.15px;top:2px;transform:scaleX(0.8800)">2,00</div></div>
<div class="cp" style="left:682px;top:507px;width:79px;height:17px"><div class="tx" style="left:52.27px;top:2px;transform:scaleX(0.8800)">17,02</div></div>
<div class="cp" style="left:762px;top:507px;width:79px;height:17px"><div class="tx" style="left:52.27px;top:2px;transform:scaleX(0.8800)">34,04</div></div>
<div class="cp" style="left:842px;top:507px;width:46px;height:17px"><div class="tx" style="left:25.15px;top:2px;transform:scaleX(0.8800)">0,00</div></div>
<div class="cp" style="left:1019px;top:507px;width:69px;height:17px"><div class="tx" style="left:33.46px;top:2px;transform:scaleX(0.8800)">220323</div></div>
<div class="cp" style="left:12px;top:525px;width:23px;height:17px"><div class="tx" style="left:7.55px;top:2px;transform:scaleX(0.8800);color:#787878">20</div></div>
<div class="cp" style="left:36px;top:525px;width:58px;height:17px"><div class="tx" style="left:1.40px;top:2px;transform:scaleX(0.8800)">08-03-2011</div></div>
<div class="cp" style="left:95px;top:525px;width:199px;height:17px"><div class="tx" style="left:1.40px;top:2px;transform:scaleX(0.8800)">9000 Click laminaat per M²</div></div>
<div class="cp" style="left:495px;top:525px;width:119px;height:17px"><div class="tx" style="left:1.40px;top:2px;transform:scaleX(0.8800)">Contantbon</div></div>
<div class="cp" style="left:615px;top:525px;width:66px;height:17px"><div class="tx" style="left:39.27px;top:2px;transform:scaleX(0.8800)">25,00</div></div>
<div class="cp" style="left:682px;top:525px;width:79px;height:17px"><div class="tx" style="left:52.27px;top:2px;transform:scaleX(0.8800)">20,40</div></div>
<div class="cp" style="left:762px;top:525px;width:79px;height:17px"><div class="tx" style="left:46.40px;top:2px;transform:scaleX(0.8800)">510,00</div></div>
<div class="cp" style="left:842px;top:525px;width:46px;height:17px"><div class="tx" style="left:25.15px;top:2px;transform:scaleX(0.8800)">0,00</div></div>
<div class="cp" style="left:1019px;top:525px;width:69px;height:17px"><div class="tx" style="left:33.46px;top:2px;transform:scaleX(0.8800)">220323</div></div>
<div class="cp" style="left:12px;top:543px;width:23px;height:17px"><div class="tx" style="left:7.55px;top:2px;transform:scaleX(0.8800);color:#787878">21</div></div>
<div class="cp" style="left:36px;top:543px;width:58px;height:17px"><div class="tx" style="left:1.40px;top:2px;transform:scaleX(0.8800)">06-03-2011</div></div>
<div class="cp" style="left:95px;top:543px;width:199px;height:17px"><div class="tx" style="left:1.40px;top:2px;transform:scaleX(0.8800)">7001 Moertjes M8 per doosje á 25 stuks</div></div>
<div class="cp" style="left:495px;top:543px;width:119px;height:17px"><div class="tx" style="left:1.40px;top:2px;transform:scaleX(0.8800)">Contantbon</div></div>
<div class="cp" style="left:615px;top:543px;width:66px;height:17px"><div class="tx" style="left:45.15px;top:2px;transform:scaleX(0.8800)">2,00</div></div>
<div class="cp" style="left:682px;top:543px;width:79px;height:17px"><div class="tx" style="left:58.15px;top:2px;transform:scaleX(0.8800)">1,25</div></div>
<div class="cp" style="left:762px;top:543px;width:79px;height:17px"><div class="tx" style="left:58.15px;top:2px;transform:scaleX(0.8800)">2,50</div></div>
<div class="cp" style="left:842px;top:543px;width:46px;height:17px"><div class="tx" style="left:25.15px;top:2px;transform:scaleX(0.8800)">0,00</div></div>
<div class="cp" style="left:1019px;top:543px;width:69px;height:17px"><div class="tx" style="left:33.46px;top:2px;transform:scaleX(0.8800)">220317</div></div>
<div class="cp" style="left:12px;top:561px;width:23px;height:17px"><div class="tx" style="left:7.55px;top:2px;transform:scaleX(0.8800);color:#787878">22</div></div>
<div class="cp" style="left:36px;top:561px;width:58px;height:17px"><div class="tx" style="left:1.40px;top:2px;transform:scaleX(0.8800)">06-03-2011</div></div>
<div class="cp" style="left:95px;top:561px;width:199px;height:17px"><div class="tx" style="left:1.40px;top:2px;transform:scaleX(0.8800)">10004 Workmate (Black&amp;Dekker) type wm</div></div>
<div class="cp" style="left:495px;top:561px;width:119px;height:17px"><div class="tx" style="left:1.40px;top:2px;transform:scaleX(0.8800)">Contantbon</div></div>
<div class="cp" style="left:615px;top:561px;width:66px;height:17px"><div class="tx" style="left:45.15px;top:2px;transform:scaleX(0.8800)">1,00</div></div>
<div class="cp" style="left:682px;top:561px;width:79px;height:17px"><div class="tx" style="left:47.19px;top:2px;transform:scaleX(0.8800)">113,42</div></div>
<div class="cp" style="left:762px;top:561px;width:79px;height:17px"><div class="tx" style="left:47.19px;top:2px;transform:scaleX(0.8800)">113,42</div></div>
<div class="cp" style="left:842px;top:561px;width:46px;height:17px"><div class="tx" style="left:25.15px;top:2px;transform:scaleX(0.8800)">0,00</div></div>
<div class="cp" style="left:1019px;top:561px;width:69px;height:17px"><div class="tx" style="left:33.46px;top:2px;transform:scaleX(0.8800)">220315</div></div>
<div class="cp" style="left:12px;top:579px;width:23px;height:13px"><div class="tx" style="left:7.55px;top:2px;transform:scaleX(0.8800);color:#787878">23</div></div>
<div class="cp" style="left:36px;top:579px;width:58px;height:13px"><div class="tx" style="left:1.40px;top:2px;transform:scaleX(0.8800)">06-03-2011</div></div>
<div class="cp" style="left:95px;top:579px;width:199px;height:13px"><div class="tx" style="left:1.40px;top:2px;transform:scaleX(0.8800)">7011 Boutjes M8 per doosje á 25 stuks</div></div>
<div class="cp" style="left:495px;top:579px;width:119px;height:13px"><div class="tx" style="left:1.40px;top:2px;transform:scaleX(0.8800)">Contantbon</div></div>
<div class="cp" style="left:615px;top:579px;width:66px;height:13px"><div class="tx" style="left:45.15px;top:2px;transform:scaleX(0.8800)">2,00</div></div>
<div class="cp" style="left:682px;top:579px;width:79px;height:13px"><div class="tx" style="left:58.15px;top:2px;transform:scaleX(0.8800)">1,25</div></div>
<div class="cp" style="left:762px;top:579px;width:79px;height:13px"><div class="tx" style="left:58.15px;top:2px;transform:scaleX(0.8800)">2,50</div></div>
<div class="cp" style="left:842px;top:579px;width:46px;height:13px"><div class="tx" style="left:25.15px;top:2px;transform:scaleX(0.8800)">0,00</div></div>
<div class="cp" style="left:1019px;top:579px;width:69px;height:13px"><div class="tx" style="left:33.46px;top:2px;transform:scaleX(0.8800)">220317</div></div>
<div class="sg" style="left:30px;top:13px;color:#1e1e1e;letter-spacing:0.15px">Artikelhistorie</div>
<div class="sg" style="left:828px;top:146px;letter-spacing:-0.35px;color:#1e1e1e">Sorteer</div>
<div class="sg" style="left:942px;top:146px;color:#9c9c9c;letter-spacing:-0.05px">Vul de lijst</div>
<div class="abs" style="left:978px;top:158px;width:3px;height:1px;background:#9c9c9c"></div>
<div class="sg" style="left:1033px;top:146px;letter-spacing:-0.3px;color:#1e1e1e"><span style="text-decoration:underline">G</span>a naar order</div>
<!-- vertical scrollbar -->
<div class="abs" style="left:1089px;top:163px;width:3px;height:429px;background:#f0f0f0"></div>
<div class="abs" style="left:1092px;top:163px;width:16px;height:429px;background:#ededed"></div>
<svg class="abs" style="left:1097px;top:170px" width="8" height="4"><path d="M0 4h7L3.5 0z" fill="#404040"/></svg>
<div class="abs" style="left:1092px;top:181px;width:15px;height:15px;box-sizing:border-box;border:1px solid #9a9a9a;border-radius:2px;background:linear-gradient(90deg,#f4f4f4 0,#ececec 50%,#d8d8d8 51%,#d0d0d0 100%)"></div>
<svg class="abs" style="left:1096px;top:582px" width="8" height="4"><path d="M0 0h7L3.5 4z" fill="#404040"/></svg>
<!-- horizontal scrollbar -->
<div class="abs" style="left:12px;top:592px;width:1079px;height:17px;background:#e9e9e9;border-top:1px solid #e2e2e2;box-sizing:border-box"></div>
<svg class="abs" style="left:18px;top:597px" width="4" height="7"><path d="M4 0v7L0 3.5z" fill="#404040"/></svg>
<div class="abs" style="left:30px;top:593px;width:15px;height:15px;box-sizing:border-box;border:1px solid #9a9a9a;border-radius:2px;background:linear-gradient(#f4f4f4 0,#ececec 50%,#d8d8d8 51%,#d0d0d0 100%)"></div>
<svg class="abs" style="left:1081px;top:597px" width="4" height="7"><path d="M0 0v7L4 3.5z" fill="#404040"/></svg>
</body></html>
